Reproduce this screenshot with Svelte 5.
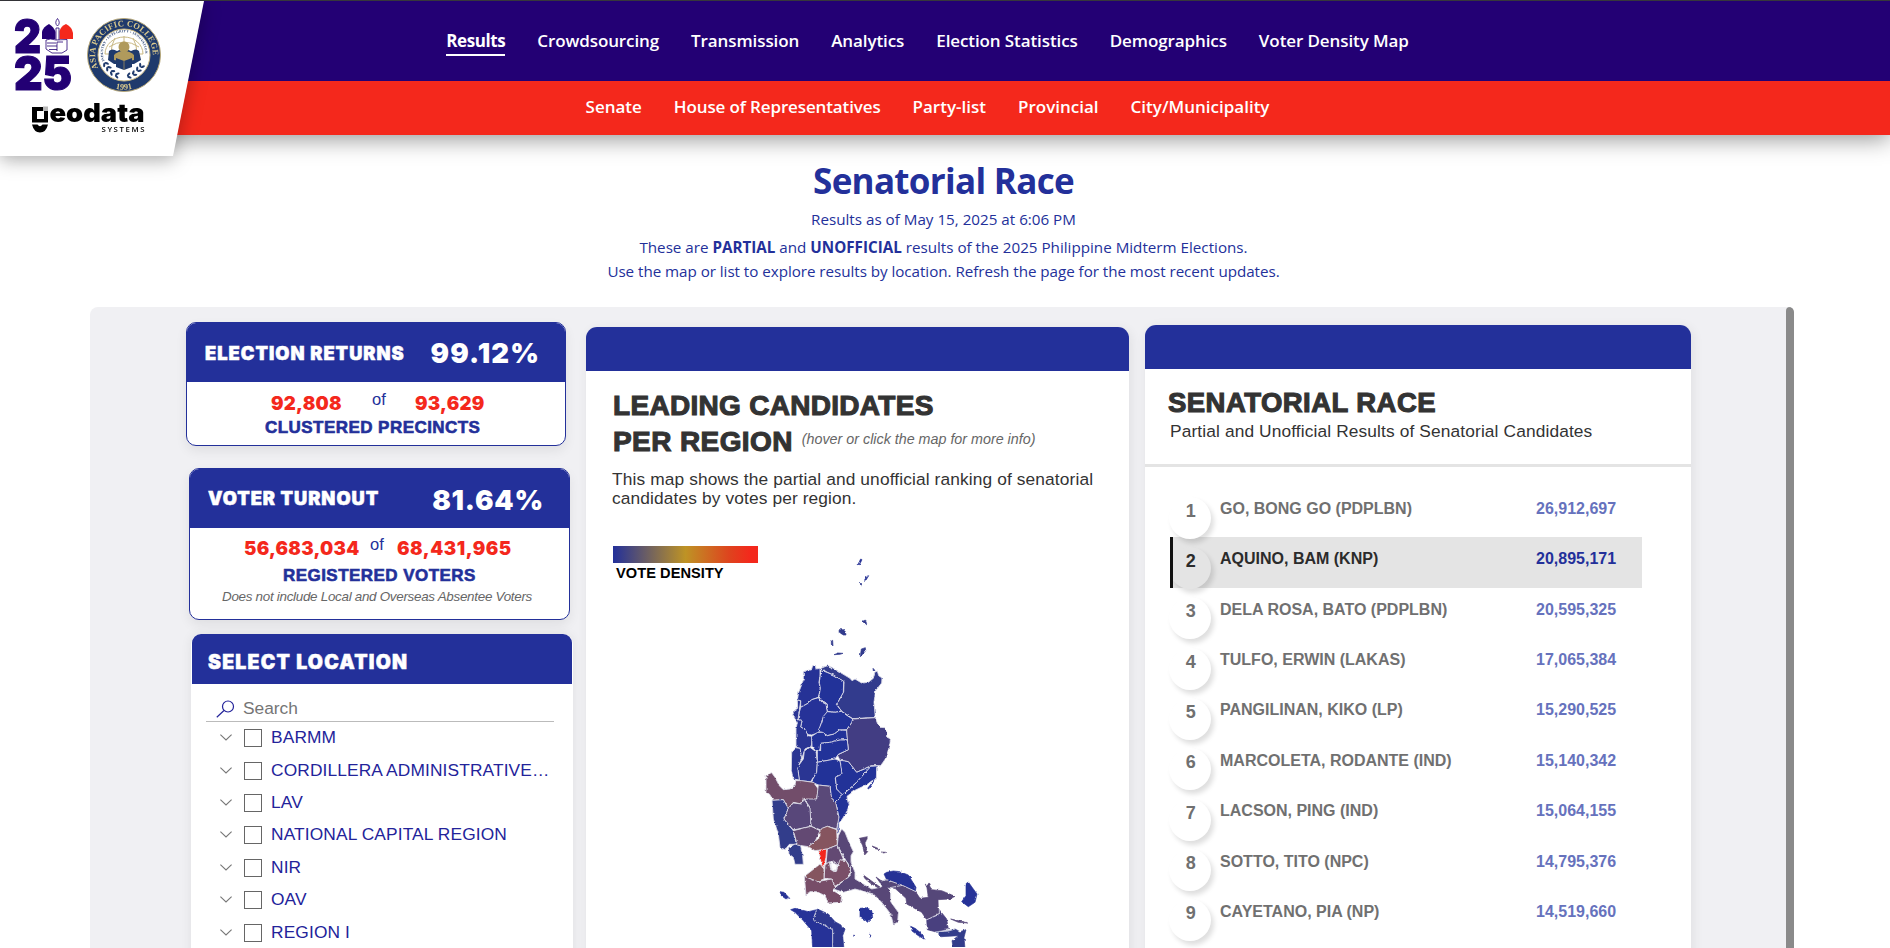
<script>
  const nav = ['Results', 'Crowdsourcing', 'Transmission', 'Analytics', 'Election Statistics', 'Demographics', 'Voter Density Map'];
  const subnav = ['Senate', 'House of Representatives', 'Party-list', 'Provincial', 'City/Municipality'];
  const locations = ['BARMM', 'CORDILLERA ADMINISTRATIVE…', 'LAV', 'NATIONAL CAPITAL REGION', 'NIR', 'OAV', 'REGION I'];
  const candidates = [
    ['GO, BONG GO (PDPLBN)', '26,912,697'],
    ['AQUINO, BAM (KNP)', '20,895,171'],
    ['DELA ROSA, BATO (PDPLBN)', '20,595,325'],
    ['TULFO, ERWIN (LAKAS)', '17,065,384'],
    ['PANGILINAN, KIKO (LP)', '15,290,525'],
    ['MARCOLETA, RODANTE (IND)', '15,140,342'],
    ['LACSON, PING (IND)', '15,064,155'],
    ['SOTTO, TITO (NPC)', '14,795,376'],
    ['CAYETANO, PIA (NP)', '14,519,660']
  ];
  const active = 1;

  // Northern half of Luzon
  const north = [
    ['#283396', '190,368 203,363 214,363 218,350 226,349 229,360 240,358 240,380 237,400 241,420 235,445 215,452 204,463 182,475 182,455 172,453 176,430 184,410 190,390'],
    ['#303a8d', '243,358 262,350 275,355 300,370 330,388 336,395 345,390 365,402 385,400 400,388 404,370 412,366 416,380 426,387 425,402 407,425 402,460 406,506 370,507 338,509 325,500 305,487 290,466 300,448 311,428 312,398 280,378 258,368 252,362 243,372'],
    ['#233099', '241,378 250,366 258,369 280,378 311,397 310,430 299,450 289,466 304,486 285,490 262,487 258,464 246,458 237,443 241,418 238,400'],
    ['#253298', '182,475 204,463 215,452 235,446 246,460 258,465 262,490 250,505 243,525 233,552 215,558 202,556 195,542 182,534 186,516 174,512 178,490'],
    ['#293494', '172,453 182,456 178,482 174,512 186,515 182,534 196,542 204,560 216,562 215,590 195,600 185,630 180,598 168,595 168,540 172,520 164,508 158,498 164,484 173,478'],
    ['#233099', '262,488 285,490 304,487 322,500 338,510 336,520 320,542 298,543 283,555 262,560 247,550 234,548 245,520 250,502'],
    ['#233099', '233,550 247,550 262,560 283,555 298,543 320,544 323,572 300,573 270,580 242,583 240,602 228,608 216,592 215,562'],
    ['#433e83', '338,510 406,506 413,525 420,535 435,536 440,545 440,564 452,570 446,600 436,630 422,650 393,650 350,670 325,638 300,634 292,618 325,602 322,572 320,542 336,520'],
    ['#233099', '242,583 270,580 300,573 322,573 325,602 295,616 285,630 232,640 232,608 242,602'],
    ['#2a3593', '190,630 193,606 210,595 228,608 232,640 230,670 212,698 178,695 172,655'],
    ['#2a3593', '155,608 165,596 180,598 185,630 173,655 178,693 160,690 154,665'],
    ['#243198', '232,640 285,630 300,636 308,665 305,678 286,685 290,720 308,738 286,758 272,745 270,712 235,708 214,698 230,670'],
    ['#243198', '300,634 325,638 350,670 393,652 350,700 308,738 290,720 286,685 306,675'],
    ['#243198', '422,650 410,655 409,690 395,696 382,706 345,724 321,742 324,760 328,765 322,785 307,810 297,822 297,850 290,855 295,800 286,758 308,738 345,705 393,652'],
    ['#724e6a', '78,678 95,671 105,685 118,710 130,722 150,720 165,710 168,695 185,695 220,700 235,720 230,750 205,755 190,745 185,765 160,760 145,778 130,752 100,754 88,735 78,730'],
    ['#333c8b', '96,754 130,752 145,778 132,810 160,845 165,870 170,886 148,886 135,902 120,895 115,855 100,810'],
    ['#333c8b', '145,896 165,885 182,890 188,920 190,946 165,946 160,925 147,915'],
    ['#58477a', '145,778 160,762 185,765 192,750 212,780 213,832 160,843 132,810'],
    ['#5a4879', '193,750 230,750 235,708 270,712 275,748 287,760 297,805 290,840 262,832 240,842 213,832 210,775'],
    ['#634a73', '160,845 213,832 240,845 225,878 205,893 172,888'],
    ['#86555f', '240,840 262,832 290,842 292,888 262,900 225,905 205,893 240,865'],
    ['#644a73', '262,900 292,888 310,930 292,948 272,938 258,945'],
    ['#584777', '295,860 305,840 315,850 327,880 340,908 333,920 333,940 345,970 345,990 375,1008 395,1020 420,1015 435,1008 452,1025 452,1058 475,1090 473,1120 460,1126 452,1095 425,1060 400,1035 345,1020 325,1026 310,1030 280,1020 330,980 332,955 318,935 292,888'],
    ['#7a4f68', '255,948 268,938 272,962 288,968 300,932 318,935 332,960 325,985 285,1012 275,990 252,988'],
    ['#85545f', '240,945 252,960 252,990 232,998 193,982 215,965'],
    ['#774d68', '193,982 232,998 275,990 285,1012 280,1025 305,1040 303,1060 265,1062 255,1040 230,1028 210,1028 198,1038'],
    ['#f4281c', '236,905 260,900 258,925 250,958 243,940 240,920']
  ];
  const south = [
    ['#253298', '152,1082 165,1078 205,1088 230,1082 219,1112 278,1142 278,1200 218,1200 215,1145 190,1115 165,1090'],
    ['#2d3890', '232,1080 265,1095 285,1118 303,1128 306,1136 316,1138 308,1160 312,1200 278,1200 278,1142 219,1112'],
    ['#253298', '360,1078 378,1076 395,1083 398,1105 382,1120 375,1112 360,1105'],
    ['#584777', '358,868 382,863 375,885 383,908 374,918 368,890'],
    ['#584777', '370,978 400,1000 420,1014 414,1016 390,1002 374,988'],
    ['#283396', '432,975 440,970 460,966 480,968 505,978 528,1015 526,1028 487,1008 440,992'],
    ['#544679', '408,984 425,996 440,992 487,1009 528,1030 540,1048 565,1045 560,1010 575,1022 605,1025 645,1042 630,1050 594,1052 595,1080 600,1090 560,1112 545,1090 500,1065 498,1048 465,1018 430,1015'],
    ['#4a407f', '560,1112 598,1096 598,1082 620,1110 625,1140 585,1148 562,1142'],
    ['#333c8b', '588,1148 625,1146 645,1140 660,1148 678,1142 672,1165 675,1200 640,1200 636,1175 655,1160 604,1163'],
    ['#253298', '678,1004 685,999 700,1020 711,1035 705,1060 685,1073 665,1058 678,1040'],
    ['#283396', '512,1132 525,1138 540,1150 555,1172 535,1160 516,1146'],
    ['#283396', '120,1028 132,1030 146,1045 138,1050 124,1040'],
    ['#283396', '362,30 366,32 358,48 354,46'],
    ['#283396', '380,82 386,80 376,97 372,96'],
    ['#303a8d', '297,242 315,242 318,258 310,258 298,250'],
    ['#303a8d', '368,217 376,213 380,224 374,224'],
    ['#303a8d', '364,300 376,296 377,305 364,320 361,320'],
    ['#303a8d', '274,276 278,274 279,291 274,286'],
    ['#303a8d', '282,317 295,312 309,313 300,316'],
    ['#303a8d', '361,100 366,106 362,110'],
    ['#243198', '397,700 402,696 386,720 383,718'],
    ['#584777', '396,891 410,896 420,902 405,899'],
    ['#584777', '424,909 440,910 430,912'],
    ['#544679', '632,1110 660,1116 684,1122 655,1120'],
    ['#544679', '556,1006 566,1003 572,1018 560,1014'],
    ['#283396', '389,1156 393,1160 390,1165'],
    ['#283396', '341,1158 344,1159 342,1163'],
    ['#303a8d', '399,358 403,362 400,366']
  ];
</script>

<svelte:head><title>Senatorial Race</title></svelte:head>

<div class="page">
  <header>
    <nav class="main">
      {#each nav as item, i}<span class:current={i === 0}>{item}</span>{/each}
    </nav>
    <nav class="sub">
      {#each subnav as item}<span>{item}</span>{/each}
    </nav>
    <div class="brand">
      <svg width="206" height="160" viewBox="0 0 206 160">
        <path d="M0 1H204L173 156H0Z" fill="#fff" />
        <g class="year">
          <text x="14" y="53" textLength="27" lengthAdjust="spacingAndGlyphs">2</text>
          <text x="14" y="90" textLength="58" lengthAdjust="spacingAndGlyphs">25</text>
        </g>
        <path d="M42 39V32Q43 27 49 24Q54 27 55.500 32V39Z" fill="#230074" />
        <path d="M59.500 39V31Q61 26 66 24Q72 27 73 33V39Z" fill="#f4281c" />
        <g fill="#fff" stroke="#230074" stroke-width=".8">
          <path d="M56 40V28H59V40" />
          <path d="M57.500 18.500Q61 23 57.500 26Q54 23 57.500 18.500Z" />
          <path d="M46 40Q50 38 56 40L67 39.500V50L62 53H52L46 49Z" />
          <path d="M47 43H56M47 46H57M49 49.500H57M57 42V51M57 42H63" fill="none" />
        </g>
        <circle cx="124" cy="55" r="36.500" fill="#1f3a6c" stroke="#b8a878" stroke-width="1" />
        <circle cx="124" cy="55" r="26" fill="#fff" stroke="#c9b883" stroke-width="1" />
        <g fill="none" stroke="#c9b883" stroke-width="1">
          <path d="M105 54A19 17 0 0 1 143 54M109 47Q124 37 139 47M124 36V42M115 38Q111 45 111 54M133 38Q137 45 137 54M105 54H143" />
        </g>
        <path d="M108 60L109 51Q112 48 117 51L124 48L131 51Q136 48 139 51L141 60L134 64H114Z" fill="#1f3a6c" />
        <circle cx="124" cy="47" r="5.500" fill="#b09a5c" />
        <path d="M114 60V55Q118 51 124 51Q130 51 134 55V60L124 62Z" fill="#b09a5c" />
        <path d="M116 58L124 61L132 58V67L124 70L116 67Z" fill="#1f3a6c" />
        <path d="M124 61V70" stroke="#b09a5c" stroke-width=".7" />
        <g fill="#1f3a6c">
          {#each [[106, 65, 60], [109, 69, 50], [113, 73, 35], [118, 75.5, 15], [142, 65, -60], [139, 69, -50], [135, 73, -35], [130, 75.5, -15]] as [x, y, r]}
            <g transform="translate({x} {y}) rotate({r})">
              <ellipse cx="0" cy="-1.800" rx="2.300" ry="1.100" transform="rotate(-35)" />
              <ellipse cx="0" cy="1.800" rx="2.300" ry="1.100" transform="rotate(35)" />
            </g>
          {/each}
        </g>
        <path id="arcTop" d="M98.300 68A28.800 28.800 0 1 1 149.700 68" fill="none" />
        <path id="arcIn" d="M104.500 61A21 21 0 1 1 143.500 61" fill="none" />
        <path id="arcBottom" d="M99 79A34.500 34.500 0 0 0 149 79" fill="none" />
        <text class="seal"><textPath href="#arcTop" textLength="104">ASIA PACIFIC COLLEGE</textPath></text>
        <text class="motto"><textPath href="#arcIn" textLength="74">INDUSTRY • INTEGRITY • INNOVATION</textPath></text>
        <text class="seal"><textPath href="#arcBottom" startOffset="50%" text-anchor="middle">1991</textPath></text>
        <path d="M32 107H44V111H37V119H44V111H48V122.500H32Z" fill="#000" />
        <path d="M43 106.500H48V111H43Z" fill="#b7b7b7" />
        <path d="M32 124.500H37.500Q40 128 42.500 124.500H48Q46 132.500 40 132.500Q34 132.500 32 124.500Z" fill="#000" />
        <text class="geo" x="49.500" y="122" textLength="95" lengthAdjust="spacingAndGlyphs">eodata</text>
        <text class="systems" x="101.500" y="131.500" textLength="43">SYSTEMS</text>
      </svg>
    </div>
  </header>

  <section class="intro">
    <h1>Senatorial Race</h1>
    <p class="asof">Results as of May 15, 2025 at 6:06 PM</p>
    <p>These are <b>PARTIAL</b> and <b>UNOFFICIAL</b> results of the 2025 Philippine Midterm Elections.</p>
    <p class="hint">Use the map or list to explore results by location. Refresh the page for the most recent updates.</p>
  </section>

  <main>
    <aside>
      <div class="card returns">
        <div class="head"><span class="name">ELECTION RETURNS</span><span class="pct">99.12%</span></div>
        <div class="count"><strong>92,808</strong><i>of</i><strong>93,629</strong></div>
        <div class="unit">CLUSTERED PRECINCTS</div>
      </div>
      <div class="card turnout">
        <div class="head"><span class="name">VOTER TURNOUT</span><span class="pct">81.64%</span></div>
        <div class="count"><strong>56,683,034</strong><i>of</i><strong>68,431,965</strong></div>
        <div class="unit">REGISTERED VOTERS</div>
        <div class="note">Does not include Local and Overseas Absentee Voters</div>
      </div>
      <div class="select">
        <div class="head">SELECT LOCATION</div>
        <div class="search">
          <svg width="19" height="18" viewBox="0 0 19 18" fill="none" stroke="#23239a" stroke-width="1.200"><circle cx="12" cy="6.500" r="5.500" /><path d="M8 10.500L.8 17.300" /></svg>
          <span>Search</span>
        </div>
        {#each locations as place}
          <div class="place">
            <svg width="12" height="7" viewBox="0 0 12 7" fill="none" stroke="#777" stroke-width="1.100"><path d="M.4.6L6 6L11.600.6" /></svg>
            <i class="box"></i>
            <span>{place}</span>
          </div>
        {/each}
      </div>
    </aside>

    <section class="panel leading">
      <div class="bar"></div>
      <h2><span class="l1">LEADING CANDIDATES</span><br /><span class="l2">PER REGION</span><em>(hover or click the map for more info)</em></h2>
      <p>This map shows the partial and unofficial ranking of senatorial<br />candidates by votes per region.</p>
      <div class="scale"></div>
      <div class="legend">VOTE DENSITY</div>
      <svg class="map" width="280" height="398" viewBox="0 0 840 1194">
        <filter id="coast" x="-5%" y="-5%" width="110%" height="110%">
          <feTurbulence type="fractalNoise" baseFrequency=".09" numOctaves="2" seed="4" />
          <feDisplacementMap in="SourceGraphic" scale="8" xChannelSelector="R" yChannelSelector="G" />
        </filter>
        <g filter="url(#coast)">
          <g stroke="#dcdce8" stroke-width="2.600" stroke-linejoin="round">
            {#each north as [fill, points]}<polygon {fill} {points} />{/each}
          </g>
          <g>
            {#each south as [fill, points]}<polygon {fill} stroke={fill} stroke-width="2" {points} />{/each}
          </g>
          <g fill="none" stroke="#dcdce8" stroke-width="2.600">
            <path d="M230 1082L219 1112L278 1142V1200M424 996L440 992L487 1009L528 1028M450 1016L487 1009M558 1113L598 1096V1082M586 1149L625 1146L645 1140" />
            <path d="M272 940L280 936L292 944L290 966L280 968L274 960Z" />
          </g>
        </g>
      </svg>
    </section>

    <section class="panel race">
      <div class="bar"></div>
      <div class="title">
        <h2>SENATORIAL RACE</h2>
        <p>Partial and Unofficial Results of Senatorial Candidates</p>
      </div>
      <div class="rows">
        {#each candidates as [name, votes], i}
          <div class="row" class:active={i === active}>
            <span class="rank">{i + 1}</span>
            <span class="who">{name}</span>
            <span class="votes">{votes}</span>
          </div>
        {/each}
      </div>
    </section>
    <div class="thumb"></div>
  </main>
</div>

<style>
  :global(body) { overflow: hidden; background: #fff; }
  .page { height: 948px; overflow: hidden; font-family: "Liberation Sans", Arial, sans-serif; }
  h1, h2, p { margin: 0; }
  i { font-style: normal; }

  header { position: relative; border-top: 1px solid #37373b; box-shadow: 0 4px 22px rgba(0, 0, 0, .42); font: 600 17px "Open Sans", sans-serif; color: #fff; }
  nav { display: flex; justify-content: center; gap: 32px; padding-right: 35px; white-space: nowrap; }
  .main { height: 80px; background: #230074; letter-spacing: -.1px; }
  .main span { height: 23px; line-height: 24px; margin-top: 28px; }
  .main .current { font-weight: 700; letter-spacing: -.4px; border-bottom: 2px solid #fff; height: 25px; }
  .sub { height: 54px; background: #f4281c; line-height: 52px; }
  .sub span:nth-child(2) { letter-spacing: -.13px; }
  .brand { position: absolute; left: 0; top: -1px; height: 160px; filter: drop-shadow(0 5px 9px rgba(0, 0, 0, .28)); }
  .year { font: 900 47px Inter, sans-serif; fill: #230074; stroke: #230074; stroke-width: 1.2; }
  .seal { font: 700 8.500px "Liberation Serif", serif; fill: #d9c88c; }
  .motto { font: 700 3.500px "Liberation Serif", serif; fill: #1f3a6c; }
  .geo { font: 900 26px Inter, sans-serif; }
  .systems { font: 600 7.800px "Open Sans", sans-serif; }

  .intro { height: 172px; padding: 24px 3px 0 0; box-sizing: border-box; text-align: center; color: #23309a; font: 15.200px/24px "Open Sans", sans-serif; }
  h1 { font: 700 35px/44px "Open Sans", sans-serif; letter-spacing: -.7px; }
  .asof { padding: 4px 0 4px; }
  .hint { letter-spacing: -.04px; }

  main { display: flex; align-items: flex-start; margin-left: 90px; width: 1704px; height: 641px; overflow: hidden; background: #f0f0f3; border-radius: 8px 5px 0 0; }
  aside { width: 387px; margin-left: 96px; padding-top: 15px; }
  .card { box-sizing: border-box; width: 380px; border: 1px solid #23309a; border-radius: 10px; background: #fff; box-shadow: 0 5px 12px rgba(0, 0, 0, .07); overflow: hidden; white-space: nowrap; }
  .returns { height: 124px; }
  .turnout { height: 152px; margin: 22px 0 0 3px; width: 381px; }
  .card .head { display: flex; justify-content: space-between; height: 60px; margin: -1px 0 0; padding: 0 25px 0 18px; line-height: 62px; background: #23309a; color: #fff; }
  .name { font: 900 18.300px/62px Inter, sans-serif; letter-spacing: 1px; -webkit-text-stroke: .5px #fff; }
  .pct { font: 900 27.500px/62px Inter, sans-serif; letter-spacing: 1.100px; }
  .turnout .name { line-height: 61px; letter-spacing: .95px; }
  .turnout .pct { line-height: 65px; letter-spacing: .8px; }
  .count { display: grid; grid-template-columns: 101px 43px auto; padding: 3px 0 0 84px; line-height: 36px; color: #f4281c; }
  .turnout .count { grid-template-columns: 126px 27px auto; padding: 2px 0 0 54px; }
  .count strong { font: 900 18.600px/36px Inter, sans-serif; letter-spacing: .25px; }
  .turnout .count strong:last-child { letter-spacing: .5px; }
  .count i { font-size: 16.500px; line-height: 28px; color: #23309a; }
  .unit { padding-left: 78px; font-weight: 700; font-size: 17px; line-height: 14px; letter-spacing: .45px; color: #23309a; -webkit-text-stroke: .6px #23309a; }
  .turnout .unit { padding-left: 93px; line-height: 19px; }
  .note { padding-left: 32px; font: italic 13.400px/24px "Liberation Sans", sans-serif; letter-spacing: -.28px; color: #666; }

  .select { width: 382px; height: 330px; margin: 14px 0 0 5px; background: #fff; border-radius: 10px 10px 0 0; box-shadow: 0 0 12px rgba(0, 0, 0, .07); }
  .select .head { width: 380px; height: 50px; margin-left: 1px; box-sizing: border-box; padding: 3px 0 0 16px; border-radius: 9px 9px 0 0; background: #23309a; color: #fff; font: 900 19.500px/50px Inter, sans-serif; letter-spacing: 1.200px; -webkit-text-stroke: .5px #fff; }
  .search { display: flex; align-items: center; gap: 8px; height: 38px; box-sizing: border-box; margin: 0 19px 0 15px; padding: 12px 0 0 10px; border-bottom: 1px solid #bbb; color: #757575; font-size: 17.330px; }
  .place { display: flex; align-items: center; height: 32.400px; padding-left: 29px; color: #23239a; font-size: 17.330px; letter-spacing: .13px; white-space: nowrap; position: relative; top: -.5px; }
  .box { width: 16px; height: 16px; margin: 1px 9px 0 12px; border: 1px solid #666; }

  .panel { position: relative; height: 640px; background: #fff; border-radius: 12px 12px 0 0; box-shadow: 2px 2px 12px rgba(0, 0, 0, .07); color: #333; }
  .bar { height: 44px; background: #23309a; border-radius: 11px 11px 0 0; }
  .leading { width: 543px; margin: 20px 0 0 13px; }
  .leading h2 { padding: 17px 0 0 27px; line-height: 36px; height: 72px; }
  h2 { font-size: 28px; white-space: nowrap; color: #333; -webkit-text-stroke: 1.100px #333; }
  .l1 { letter-spacing: .3px; }
  .l2 { letter-spacing: .4px; }
  em { margin-left: 9px; font-size: 14.300px; font-weight: 400; color: #666; -webkit-text-stroke: 0; position: relative; top: -7px; }
  .leading p { padding: 9.500px 0 0 26px; font-size: 17.330px; letter-spacing: .12px; line-height: 19px; white-space: nowrap; }
  .scale { width: 145px; height: 17px; margin: 38.500px 0 0 27px; background: linear-gradient(90deg, #23309a, #be9325 50%, #de441e 80%, #f4281c 95%); }
  .legend { padding-left: 30px; font-size: 14.600px; font-weight: 700; line-height: 20px; color: #000; letter-spacing: .05px; }
  .map { position: absolute; left: 154px; top: 222px; }

  .race { width: 546px; margin: 18px 0 0 16px; }
  .title { height: 79px; padding: 16px 0 0 23px; border-bottom: 3px solid #e4e4e4; }
  .title h2 { line-height: 36px; font-size: 27.500px; letter-spacing: .45px; }
  .title p { padding-left: 2px; font-size: 17.330px; line-height: 20px; letter-spacing: .12px; white-space: nowrap; }
  .rows { padding: 20px 0 0 25px; }
  .row { display: flex; width: 472px; height: 50.370px; box-sizing: border-box; font-weight: 700; font-size: 16px; line-height: 44px; color: #707070; white-space: nowrap; }
  .rank { width: 42px; height: 42px; margin-top: 9.500px; border-radius: 50%; background: #fff; box-shadow: 3px 4px 5px rgba(0, 0, 0, .13); text-align: center; text-indent: 1.500px; font-size: 18px; line-height: 29px; margin-left: -1px; }
  .who { margin-left: 9px; width: 316px; }
  .votes { color: #6672bd; }
  .active { background: linear-gradient(90deg, #111 3px, #e4e4e4 3px); color: #2b2b2b; }
  .active .rank { background: #e4e4e4; clip-path: inset(-10px -20px -20px 4px); }
  .active .votes { color: #23309a; }
  .thumb { width: 8px; height: 700px; margin-left: auto; border-radius: 4px; background: #8a8a8a; }
</style>
